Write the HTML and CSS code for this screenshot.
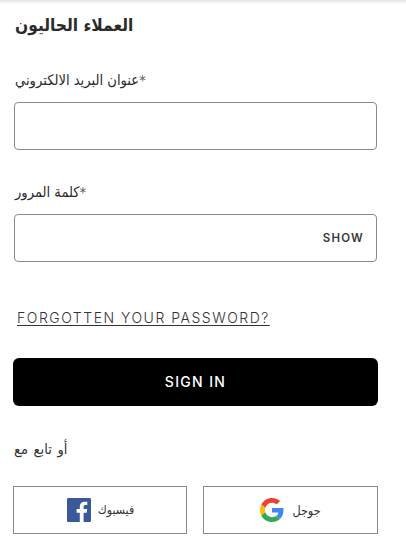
FILE: index.html
```html
<!DOCTYPE html>
<html lang="ar">
<head>
<meta charset="utf-8">
<title>تسجيل الدخول</title>
<link rel="stylesheet" href="styles.css">
</head>
<body>
<div class="topshade"></div>
<main class="page">
  <h1 class="title">العملاء الحاليون</h1>
  <label class="label label-email"><span dir="rtl">عنوان البريد الالكتروني</span><span class="star">*</span></label>
  <div class="field"></div>
  <label class="label label-pass"><span dir="rtl">كلمة المرور</span><span class="star">*</span></label>
  <div class="field field-pass"><span class="show">SHOW</span></div>
  <a class="forgot" href="#">FORGOTTEN YOUR PASSWORD?</a>
  <button class="signin" type="button">SIGN IN</button>
  <p class="or" dir="rtl">أو تابع مع</p>
  <div class="social">
    <a class="soc soc-fb" href="#">
      <svg class="ico" viewBox="0 0 24 24" aria-hidden="true"><rect width="24" height="24" rx="1.2" fill="#3b5998"/><path d="M16.6 24v-9.3h3.1l.5-3.6h-3.6V8.800c0-1 .3-1.800 1.800-1.800h1.900V3.800c-.3 0-1.500-.1-2.800-.1-2.800 0-4.700 1.700-4.700 4.800v2.600H9.600v3.600h3.200V24z" fill="#fff"/></svg>
      <span dir="rtl">فيسبوك</span>
    </a>
    <a class="soc soc-g" href="#">
      <svg class="ico" viewBox="0 0 48 48" aria-hidden="true"><path fill="#EA4335" d="M24 9.500c3.500 0 6.700 1.200 9.200 3.600l6.900-6.900C35.900 2.400 30.500 0 24 0 14.600 0 6.500 5.400 2.600 13.200l8 6.200C12.500 13.700 17.800 9.500 24 9.500z"/><path fill="#4285F4" d="M47 24.500c0-1.600-.1-3.100-.4-4.500H24v9h12.900c-.6 3-2.200 5.500-4.700 7.200l7.700 6c4.500-4.200 7.100-10.300 7.100-17.700z"/><path fill="#FBBC05" d="M10.500 28.600c-.5-1.400-.8-3-.8-4.600s.3-3.200.8-4.600l-8-6.200C.9 16.500 0 20.100 0 24s.9 7.500 2.600 10.800z"/><path fill="#34A853" d="M24 48c6.500 0 11.900-2.100 15.900-5.800l-7.700-6c-2.200 1.400-4.900 2.300-8.200 2.300-6.200 0-11.500-4.200-13.400-9.900l-8 6.200C6.500 42.600 14.600 48 24 48z"/></svg>
      <span dir="rtl">جوجل</span>
    </a>
  </div>
</main>
</body>
</html>
```
FILE: styles.css
```css
* { box-sizing: border-box; }
html, body { margin: 0; padding: 0; background: #fff; }
body { width: 406px; height: 541px; overflow: hidden; font-family: "DejaVu Sans Condensed", "DejaVu Sans", sans-serif; color: #222; }
.topshade { height: 4px; background: linear-gradient(#e4e4e4, #fff); }
.page { padding: 0 28px 0 14px; display: flex; flex-direction: column; align-items: flex-start; }
.title { margin: 9px 0 0 1px; height: 24px; font-size: 17.200px; line-height: 24px; font-weight: 700; color: #2b2b2b; }
.label { display: block; margin-left: 1px; font-size: 14.600px; line-height: 18px; height: 18px; color: #2b2b2b; }
.label-email { margin-top: 34px; }
.label-pass { margin-top: 33px; }
.star { color: #555; }
.field { width: 363px; height: 48px; margin-top: 13px; border: 1px solid #8a8a8a; border-radius: 4px; background: #fff; display: flex; align-items: center; justify-content: flex-end; padding-right: 12px; }
.show { font-family: Inter, "Liberation Sans", sans-serif; font-size: 11.500px; font-weight: 600; letter-spacing: 1.200px; color: #3a3a3a; }
.forgot { margin: 46px 0 0 3px; font-family: Inter, "Liberation Sans", sans-serif; font-size: 14px; line-height: 20px; letter-spacing: 1.510px; font-weight: 300; color: #333; text-decoration: underline; text-underline-offset: 2px; }
.signin { margin: 30px 0 0 -1px; padding: 0 0 2px; width: 365px; height: 48px; border: 0; border-radius: 6px; background: #000; color: #fff; font-family: Inter, "Liberation Sans", sans-serif; font-size: 14px; font-weight: 500; letter-spacing: 1.350px; }
.or { margin: 33px 0 0; font-size: 14.500px; word-spacing: 1.500px; line-height: 20px; color: #333; align-self: flex-start; }
.social { display: flex; gap: 16px; margin: 27px 0 0 -1px; width: 365px; }
.soc { flex: 0 0 auto; width: 174px; height: 48px; border: 1px solid #8a8a8a; background: #fff; display: flex; align-items: center; justify-content: center; gap: 8px; font-size: 12.500px; color: #333; text-decoration: none; }
.soc-fb { gap: 7px; padding-left: 1px; font-size: 12.200px; }
.soc-g { width: 175px; }
.ico { width: 24px; height: 24px; display: block; }
```
